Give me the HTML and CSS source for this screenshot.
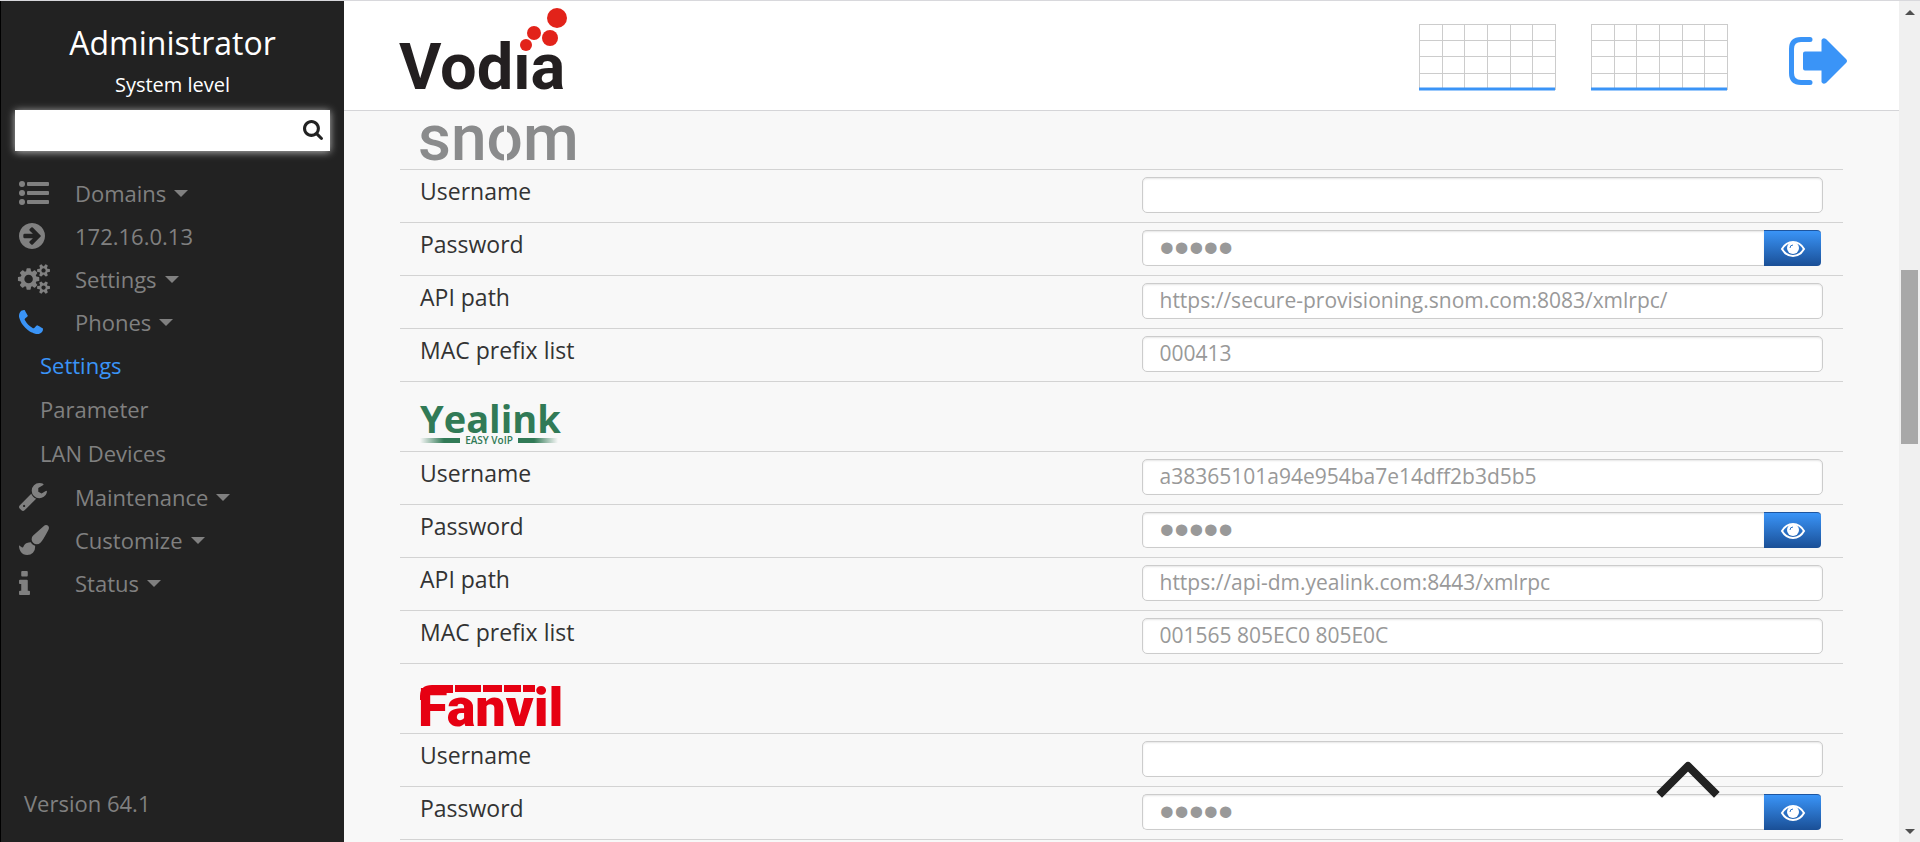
FILE: index.html
```html
<!DOCTYPE html>
<html lang="en">
<head>
  <meta charset="UTF-8" />
  <meta name="viewport" content="width=device-width, initial-scale=1" />
  <title>Vodia - Phone Settings</title>
  <link rel="stylesheet" href="styles.css">
</head>
<body>

  <!-- Sidebar -->
  <aside class="sidebar">
    <h1>Administrator</h1>
    <p class="level">System level</p>
    <form class="search" action="#">
      <input type="text" aria-label="Search" />
      <button type="submit" aria-label="Search">
        <svg width="20" height="20" viewBox="64 128 1664 1664"><path d="M1216 832q0-185-131.500-316.500t-316.500-131.500-316.500 131.500-131.500 316.500 131.500 316.500 316.500 131.500 316.500-131.500 131.500-316.500zm512 832q0 52-38 90t-90 38q-54 0-90-38l-343-342q-179 124-399 124-143 0-273.500-55.500t-225-150-150-225-55.500-273.500 55.500-273.500 150-225 225-150 273.500-55.500 273.500 55.500 225 150 150 225 55.500 273.500q0 220-124 399l343 343q37 37 37 90z"/></svg>
      </button>
    </form>

    <nav>
      <a href="#" class="item">
        <span class="icon"><svg width="30" height="24" viewBox="0 0 30 24"><circle cx="3" cy="3" r="3"/><circle cx="3" cy="12" r="3"/><circle cx="3" cy="21" r="3"/><rect x="8" y="1" width="22" height="4" rx="1"/><rect x="8" y="10" width="22" height="4" rx="1"/><rect x="8" y="19" width="22" height="4" rx="1"/></svg></span>
        Domains <span class="caret"></span>
      </a>
      <a href="#" class="item">
        <span class="icon"><svg width="26" height="26" viewBox="128 128 1536 1536"><path d="M1413 896q0-27-18-45l-91-91-362-362q-18-18-45-18t-45 18l-91 91q-18 18-18 45t18 45l189 189h-502q-26 0-45 19t-19 45v128q0 26 19 45t45 19h502l-189 189q-19 19-19 45t19 45l91 91q18 18 45 18t45-18l362-362 91-91q18-18 18-45zm251 0q0 209-103 385.500t-279.500 279.500-385.500 103-385.500-103-279.500-279.500-103-385.500 103-385.500 279.500-279.500 385.500-103 385.500 103 279.500 279.500 103 385.500z"/></svg></span>
        172.16.0.13
      </a>
      <a href="#" class="item">
        <span class="icon"><svg width="32" height="30" viewBox="0 0 1920 1792"><path d="M832 896q0-106-75-181t-181-75-181 75-75 181 75 181 181 75 181-75 75-181zm768 512q0-52-38-90t-90-38-90 38-38 90q0 53 37.500 90.500t90.500 37.500 90.500-37.500 37.500-90.500zm0-1024q0-52-38-90t-90-38-90 38-38 90q0 53 37.500 90.500t90.500 37.500 90.500-37.500 37.500-90.500zm-384 421v185q0 10-7 19.500t-16 10.500l-155 24q-11 35-32 76 34 48 90 115 7 11 7 20 0 12-7 19-23 30-82.500 89.500t-78.500 59.500q-11 0-21-7l-115-90q-37 19-77 31-11 108-23 155-7 24-30 24h-186q-11 0-20-7.500t-10-17.500l-23-153q-34-10-75-31l-118 89q-7 7-20 7-11 0-21-8-144-133-144-160 0-9 7-19 10-14 41-53t47-61q-23-44-35-82l-152-24q-10-1-17-9.500t-7-19.500v-185q0-10 7-19.500t16-10.500l155-24q11-35 32-76-34-48-90-115-7-11-7-20 0-12 7-20 22-30 82-89t79-59q11 0 21 7l115 90q34-18 77-32 11-108 23-154 7-24 30-24h186q11 0 20 7.500t10 17.500l23 153q34 10 75 31l118-89q8-7 20-7 11 0 21 8 144 133 144 160 0 8-7 19-12 16-42 54t-45 60q23 48 34 82l152 23q10 2 17 10.500t7 19.500zm640 533v140q0 16-149 31-12 27-30 52 51 113 51 138 0 4-4 7-122 71-124 71-8 0-46-47t-52-68q-20 2-30 2t-30-2q-14 21-52 68t-46 47q-2 0-124-71-4-3-4-7 0-25 51-138-18-25-30-52-149-15-149-31v-140q0-16 149-31 13-29 30-52-51-113-51-138 0-4 4-7 4-2 35-20t59-34 30-16q8 0 46 46.500t52 67.500q20-2 30-2t30 2q51-71 92-112l6-2q4 0 124 70 4 3 4 7 0 25-51 138 17 23 30 52 149 15 149 31zm0-1024v140q0 16-149 31-12 27-30 52 51 113 51 138 0 4-4 7-122 71-124 71-8 0-46-47t-52-68q-20 2-30 2t-30-2q-14 21-52 68t-46 47q-2 0-124-71-4-3-4-7 0-25 51-138-18-25-30-52-149-15-149-31v-140q0-16 149-31 13-29 30-52-51-113-51-138 0-4 4-7 4-2 35-20t59-34 30-16q8 0 46 46.500t52 67.500q20-2 30-2t30 2q51-71 92-112l6-2q4 0 124 70 4 3 4 7 0 25-51 138 17 23 30 52 149 15 149 31z"/></svg></span>
        Settings <span class="caret"></span>
      </a>
      <a href="#" class="item open">
        <span class="icon"><svg width="24" height="24" viewBox="192 128 1408 1408"><path d="M1600 1240q0 27-10 70.500t-21 68.500q-21 50-122 106-94 51-186 51-27 0-53-3.500t-57.500-12.500-47-14.500-55.500-20.500-49-18q-98-35-175-83-127-79-264-216t-216-264q-48-77-83-175-3-9-18-49t-20.500-55.500-14.500-47-12.500-57.500-3.500-53q0-92 51-186 56-101 106-122 25-11 68.500-21t70.500-10q14 0 21 3 18 6 53 76 11 19 30 54t35 63.500 31 53.500q3 4 17.500 25t21.500 35.500 7 28.500q0 20-28.500 50t-62 55-62 53-28.500 46q0 9 5 22.500t8.500 20.500 14 24 11.500 19q76 137 174 235t235 174q2 1 19 11.500t24 14 20.500 8.500 22.500 5q18 0 46-28.500t53-62 55-62 50-28.500q14 0 28.500 7t35.500 21.500 25 17.500q25 15 53.500 31t63.500 35 54 30q70 35 76 53 3 7 3 21z"/></svg></span>
        Phones <span class="caret"></span>
      </a>
      <div class="submenu">
        <a href="#" class="active">Settings</a>
        <a href="#">Parameter</a>
        <a href="#">LAN Devices</a>
      </div>
      <a href="#" class="item">
        <span class="icon"><svg width="28" height="28" viewBox="85 128 1643 1643"><path d="M448 1472q0-26-19-45t-45-19-45 19-19 45 19 45 45 19 45-19 19-45zm644-420l-682 682q-37 37-90 37-52 0-91-37l-106-108q-38-36-38-90 0-53 38-91l681-681q39 98 114.500 173.500t173.500 114.500zm634-435q0 39-23 106-47 134-164.500 217.500t-258.500 83.500q-185 0-316.500-131.500t-131.500-316.500 131.500-316.500 316.500-131.500q58 0 121.500 16.500t107.500 46.500q16 11 16 28t-16 28l-293 169v224l193 107q5-3 79-48.500t135.500-81 70.500-35.500q15 0 23.500 10t8.500 25z"/></svg></span>
        Maintenance <span class="caret"></span>
      </a>
      <a href="#" class="item">
        <span class="icon"><svg width="30" height="30" viewBox="0 0 1792 1792"><path d="M1615 0q70 0 122.500 46.500t52.500 116.500q0 63-45 151-332 629-465 752-97 91-218 91-126 0-216.500-92.500t-90.500-219.500q0-128 92-212l638-579q59-54 130-54zm-909 1034q39 76 106.500 130t150.500 76l1 71q4 213-129.500 347t-348.500 134q-123 0-218-46.500t-152.500-127.500-86.500-183-29-220q7 5 41 30t62 44.500 59 36.500 46 17q41 0 55-37 25-66 57.500-112.500t69.500-76 88-47.500 103-25.500 125-10.500z"/></svg></span>
        Customize <span class="caret"></span>
      </a>
      <a href="#" class="item">
        <span class="icon"><svg width="11" height="24" viewBox="576 128 640 1408"><path d="M1216 1344v128q0 26-19 45t-45 19h-512q-26 0-45-19t-19-45v-128q0-26 19-45t45-19h64v-384h-64q-26 0-45-19t-19-45v-128q0-26 19-45t45-19h384q26 0 45 19t19 45v576h64q26 0 45 19t19 45zm-128-1152v192q0 26-19 45t-45 19h-256q-26 0-45-19t-19-45v-192q0-26 19-45t45-19h256q26 0 45 19t19 45z"/></svg></span>
        Status <span class="caret"></span>
      </a>
    </nav>

    <p class="version">Version 64.1</p>
  </aside>

  <!-- Page -->
  <div class="page">
    <header>
      <a href="#" class="logo" aria-label="Vodia">
        <svg width="170" height="90" viewBox="0 0 170 90">
          <text class="vodia" x="0" y="81">Vodia</text>
          <rect x="116" y="24" width="20" height="20" fill="#fff"/>
          <g fill="#e2231a"><circle cx="127" cy="37" r="6"/><circle cx="135" cy="25" r="7"/><circle cx="151" cy="30" r="8"/><circle cx="158" cy="10" r="10"/></g>
        </svg>
      </a>
      <div class="charts">
        <svg width="137" height="68" viewBox="0 0 137 68"><path class="grid" d="M0 1H136V67M0 1V67M0 17H136M0 33H136M0 50H136M23 1V67M45 1V67M68 1V67M91 1V67M113 1V67"/><path class="line" d="M0 66H136"/></svg>
        <svg width="137" height="68" viewBox="0 0 137 68"><path class="grid" d="M0 1H136V67M0 1V67M0 17H136M0 33H136M0 50H136M23 1V67M45 1V67M68 1V67M91 1V67M113 1V67"/><path class="line" d="M0 66H136"/></svg>
      </div>
      <a href="#" class="logout" aria-label="Log out">
        <svg width="58" height="48" viewBox="0 0 58 48"><path d="M21 2.500H12Q2.500 2.500 2.500 12V36Q2.500 45.500 12 45.500H21" fill="none" stroke="#3a94f7" stroke-width="5" stroke-linecap="round"/><path d="M16 14.500H32.500V3Q34 0 37 2L57 22Q59 24 57 26L37 46Q34 48 32.500 45V33.500H16Q14 33.500 14 31.500V16.500Q14 14.500 16 14.500Z" fill="#3a94f7"/></svg>
      </a>
    </header>

    <main>
      <section>
        <h2>
          <svg width="158" height="40" viewBox="0 0 158 40"><text class="snom" x="-2" y="38">snom</text><rect x="84" y="0" width="3" height="40" fill="#f8f8f8"/></svg>
        </h2>
        <div class="row">
          <label for="snom-user">Username</label>
          <div class="field"><input type="text" id="snom-user" /></div>
        </div>
        <div class="row">
          <label for="snom-pass">Password</label>
          <div class="field">
            <input type="password" id="snom-pass" value="12345" />
            <button type="button" aria-label="Show password"><svg class="eye" width="24" height="16" viewBox="0 0 24 16"><path d="M1 8Q5 1 12 1T23 8Q19 15 12 15T1 8Z"/><circle cx="12" cy="7" r="6"/><path class="glint" d="M9 7Q9 4 12 4"/></svg></button>
          </div>
        </div>
        <div class="row">
          <label for="snom-api">API path</label>
          <div class="field"><input type="text" id="snom-api" value="https://secure-provisioning.snom.com:8083/xmlrpc/" /></div>
        </div>
        <div class="row">
          <label for="snom-mac">MAC prefix list</label>
          <div class="field"><input type="text" id="snom-mac" value="000413" /></div>
        </div>
      </section>

      <section>
        <h2>
          <svg width="140" height="40" viewBox="0 0 140 40">
            <defs>
              <linearGradient id="fadeLeft"><stop offset="0" stop-color="#317a56" stop-opacity="0"/><stop offset="0.600" stop-color="#317a56"/></linearGradient>
              <linearGradient id="fadeRight"><stop offset="0.400" stop-color="#317a56"/><stop offset="1" stop-color="#317a56" stop-opacity="0"/></linearGradient>
            </defs>
            <text class="yealink" x="0" y="29">Yealink</text>
            <rect x="0" y="34" width="40" height="5" fill="url(#fadeLeft)"/>
            <rect x="98" y="34" width="40" height="5" fill="url(#fadeRight)"/>
            <text class="voip" x="69" y="40">EASY VoIP</text>
          </svg>
        </h2>
        <div class="row">
          <label for="yea-user">Username</label>
          <div class="field"><input type="text" id="yea-user" value="a38365101a94e954ba7e14dff2b3d5b5" /></div>
        </div>
        <div class="row">
          <label for="yea-pass">Password</label>
          <div class="field">
            <input type="password" id="yea-pass" value="12345" />
            <button type="button" aria-label="Show password"><svg class="eye" width="24" height="16" viewBox="0 0 24 16"><path d="M1 8Q5 1 12 1T23 8Q19 15 12 15T1 8Z"/><circle cx="12" cy="7" r="6"/><path class="glint" d="M9 7Q9 4 12 4"/></svg></button>
          </div>
        </div>
        <div class="row">
          <label for="yea-api">API path</label>
          <div class="field"><input type="text" id="yea-api" value="https://api-dm.yealink.com:8443/xmlrpc" /></div>
        </div>
        <div class="row">
          <label for="yea-mac">MAC prefix list</label>
          <div class="field"><input type="text" id="yea-mac" value="001565 805EC0 805E0C" /></div>
        </div>
      </section>

      <section>
        <h2>
          <svg width="150" height="42" viewBox="0 0 150 42">
            <text class="fanvil" x="-2" y="42">Fanvil</text>
            <g fill="#e60012"><path d="M0 16V12Q0 1 12 1H33V9H12Q9 9 9 16Z"/><rect x="35" y="1" width="26" height="7"/><rect x="63" y="1" width="19" height="7"/><rect x="84" y="1" width="17" height="7"/><rect x="103" y="1" width="12" height="7"/></g>
          </svg>
        </h2>
        <div class="row">
          <label for="fan-user">Username</label>
          <div class="field"><input type="text" id="fan-user" /></div>
        </div>
        <div class="row">
          <label for="fan-pass">Password</label>
          <div class="field">
            <input type="password" id="fan-pass" value="12345" />
            <button type="button" aria-label="Show password"><svg class="eye" width="24" height="16" viewBox="0 0 24 16"><path d="M1 8Q5 1 12 1T23 8Q19 15 12 15T1 8Z"/><circle cx="12" cy="7" r="6"/><path class="glint" d="M9 7Q9 4 12 4"/></svg></button>
          </div>
        </div>
      </section>
    </main>

    <button type="button" class="to-top" aria-label="Back to top">
      <svg width="62" height="36" viewBox="0 0 62 36"><path d="M5 31L31 5L57 31" fill="none" stroke="#222" stroke-width="8" stroke-linecap="square" stroke-linejoin="round"/></svg>
    </button>
  </div>

  <!-- Scrollbar -->
  <div class="scrollbar">
    <span class="arrow up"></span>
    <div class="track"><div class="thumb"></div></div>
    <span class="arrow down"></span>
  </div>

</body>
</html>
```
FILE: styles.css
```css
* {
  margin: 0;
  padding: 0;
  box-sizing: border-box;
}
body {
  font-family: 'Open Sans', 'Noto Sans', sans-serif;
  font-size: 22px;
  color: #333;
  background: #f8f8f8;
  height: 100vh;
  display: flex;
  overflow: hidden;
  border-top: 1px solid #d8d8dc;
}
a {
  color: inherit;
  text-decoration: none;
}
svg {
  display: block;
  overflow: visible;
}

/* Sidebar */
.sidebar {
  width: 344px;
  flex-shrink: 0;
  display: flex;
  flex-direction: column;
  background: #222;
  color: #808080;
  border-left: 1px solid #000;
}
.sidebar h1 {
  color: #fff;
  font-size: 32px;
  font-weight: 400;
  line-height: 40px;
  text-align: center;
  margin-top: 22px;
}
.level {
  color: #fff;
  font-size: 20px;
  font-weight: 500;
  line-height: 28px;
  text-align: center;
  margin-top: 8px;
}
.search {
  display: flex;
  height: 41px;
  margin: 11px 14px 20px;
  background: #fff;
  box-shadow: 0 1px 8px rgba(255, 255, 255, 0.7);
}
.search input {
  flex: 1;
  min-width: 0;
  border: none;
  padding: 0 10px;
  font-size: 20px;
  outline: none;
}
.search button {
  width: 34px;
  border: none;
  background: none;
  padding: 0 0 2px 7px;
  fill: #222;
}
.item {
  display: flex;
  align-items: center;
  height: 43px;
  padding-left: 18px;
}
.icon {
  width: 56px;
  flex-shrink: 0;
  fill: #808080;
}
.open .icon {
  fill: #3a94f7;
}
.caret {
  margin: 2px 0 0 8px;
  border: 7px solid transparent;
  border-top-color: #808080;
  border-bottom: none;
}
.submenu a {
  display: block;
  line-height: 44px;
  padding-left: 39px;
}
.submenu .active {
  color: #3a94f7;
}
.version {
  margin-top: auto;
  padding: 0 23px 24px;
  line-height: 30px;
}

/* Header */
.page {
  flex: 1;
  min-width: 0;
  position: relative;
}
header {
  display: flex;
  align-items: center;
  height: 110px;
  padding: 0 52px 0 55px;
  background: #fff;
  border-bottom: 1px solid #d5d5d8;
}
.logo {
  align-self: flex-start;
  margin: 7px auto 0 0;
}
.charts {
  display: flex;
  gap: 35px;
  margin: 2px 61px 0 0;
}
.grid {
  fill: none;
  stroke: #ccc;
  shape-rendering: crispEdges;
}
.line {
  stroke: #3a94f7;
  stroke-width: 3;
}
.logout {
  margin-top: 10px;
}
.vodia {
  font-family: Roboto, sans-serif;
  font-size: 65px;
  font-weight: 700;
  fill: #231f20;
}

/* Provisioning settings */
main {
  padding: 0 56px;
}
h2 {
  display: flex;
  align-items: flex-end;
  height: 70px;
  padding: 0 20px 7px;
  border-bottom: 1px solid #d3d3d3;
}
section:first-child h2 {
  height: 59px;
}
.snom {
  font-family: Roboto, sans-serif;
  font-size: 64px;
  font-weight: 500;
  fill: #8a8b8c;
}
.yealink {
  font-size: 38px;
  font-weight: 700;
  fill: #317a56;
}
.voip {
  font-size: 10px;
  font-weight: 600;
  text-anchor: middle;
  fill: #317a56;
}
.fanvil {
  font-family: Roboto, sans-serif;
  font-size: 54px;
  font-weight: 900;
  fill: #e60012;
}
.row {
  display: grid;
  grid-template-columns: 1fr 1fr;
  height: 53px;
  border-bottom: 1px solid #d3d3d3;
}
.row label {
  padding: 6px 20px;
  font-size: 23px;
  line-height: 30px;
}
.field {
  display: flex;
  padding: 7px 20px 9px;
}
.field input {
  flex: 1;
  min-width: 0;
  height: 36px;
  padding: 0 17px 2px;
  font-family: inherit;
  font-size: 21px;
  color: #999;
  background: #fff;
  border: 1px solid #ccc;
  border-radius: 5px;
  box-shadow: inset 0 1px 2px rgba(0, 0, 0, 0.1);
  outline: none;
}
.field input[type="password"] {
  padding-bottom: 0;
  font-family: 'Liberation Sans', sans-serif;
  font-size: 42px;
  border-right: none;
  border-radius: 5px 0 0 5px;
}
.field button {
  display: flex;
  align-items: center;
  justify-content: center;
  width: 57px;
  height: 36px;
  margin-right: 2px;
  background: linear-gradient(#3a94f7, #1a4f96);
  border: none;
  border-top: 1px solid #1d559f;
  border-radius: 0 4px 4px 0;
}
.eye path {
  fill: none;
  stroke: #fff;
  stroke-width: 2;
}
.eye circle {
  fill: #fff;
}
.eye .glint {
  stroke: #2c74c9;
  stroke-width: 1;
}

.to-top {
  position: absolute;
  right: 180px;
  bottom: 45px;
  border: none;
  background: none;
}

/* Scrollbar */
.scrollbar {
  width: 21px;
  flex-shrink: 0;
  display: flex;
  flex-direction: column;
  align-items: center;
  padding: 9px 0 8px;
  background: #f0f0f0;
}
.arrow {
  border: 5px solid transparent;
}
.arrow.up {
  border-top: none;
  border-bottom-color: #505050;
}
.arrow.down {
  border-bottom: none;
  border-top-color: #505050;
}
.track {
  flex: 1;
  width: 17px;
  display: grid;
  grid-template-rows: 63fr 43fr 95fr;
}
.thumb {
  grid-row: 2;
  background: #a8a8a8;
}
```
